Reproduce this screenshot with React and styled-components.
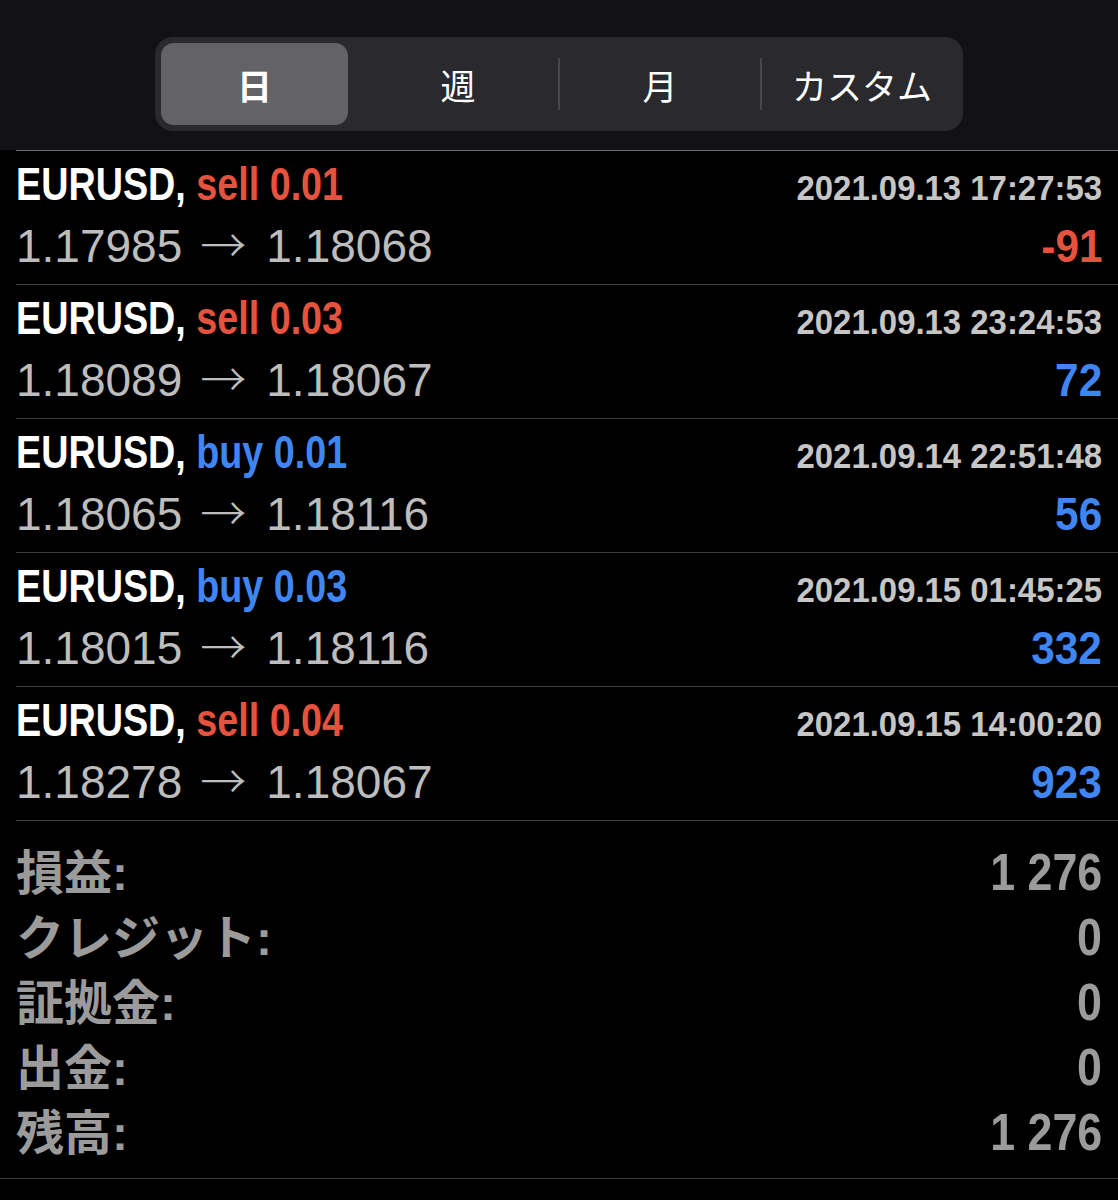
import styled, { createGlobalStyle } from "styled-components";

const GlobalStyle = createGlobalStyle`
  html, body {
    margin: 0;
    padding: 0;
    background: #000;
  }
  body {
    width: 1118px;
    font-family: "Liberation Sans", "Noto Sans CJK JP", sans-serif;
  }
`;

// コンデンス書体の代わりに横方向を縮める
const CONDENSED = `"Liberation Sans", "Noto Sans CJK JP", sans-serif`;

const Page = styled.div`
  width: 1118px;
  background: #000;
`;

// ヘッダー（期間切替）
const Header = styled.header`
  height: 150px;
  box-sizing: border-box;
  padding-top: 37px;
  background: #121113;
  display: flex;
  justify-content: center;
`;

const Segmented = styled.div`
  width: 808px;
  height: 94px;
  box-sizing: border-box;
  padding: 6px 0;
  background: #2a292e;
  border-radius: 18px;
  display: grid;
  grid-template-columns: repeat(4, 1fr);
`;

const Segment = styled.div`
  position: relative;
  display: flex;
  align-items: center;
  justify-content: center;
  margin: 0 ${(p) => (p.$active ? "9px 0 6px" : "0")};
  border-radius: 13px;
  background: ${(p) => (p.$active ? "#636267" : "transparent")};
  color: #fff;
  font-family: "Noto Sans CJK JP", sans-serif;
  font-size: 35px;
  font-weight: ${(p) => (p.$active ? 700 : 400)};
  &::before {
    content: "";
    display: ${(p) => (p.$sep ? "block" : "none")};
    position: absolute;
    left: -1px;
    top: 15px;
    bottom: 15px;
    width: 2px;
    background: #48474c;
  }
`;

// 取引行
const Row = styled.div`
  margin-left: 16px;
  padding: 2px 16px 0 0;
  height: 131px;
  border-top: 1px solid ${(p) => (p.$lead ? "#6a6a6a" : "#3c3c3c")};
`;

const Line = styled.div`
  display: flex;
  justify-content: space-between;
  align-items: baseline;
  height: 62px;
  line-height: 62px;
`;

const Symbol = styled.span`
  display: inline-block;
  transform: scaleX(0.82);
  transform-origin: left center;
  font-family: ${CONDENSED};
  font-weight: 700;
  font-size: 46px;
  color: #fff;
  white-space: nowrap;
`;

const Side = styled.span`
  color: ${(p) => (p.$buy ? "#3f86f4" : "#e5523e")};
`;

const Time = styled.span`
  display: inline-block;
  transform: scaleX(0.94);
  transform-origin: right center;
  font-family: ${CONDENSED};
  font-weight: 700;
  font-size: 35px;
  color: #c6c6c6;
  white-space: nowrap;
`;

const Prices = styled.span`
  font-family: "Liberation Sans", sans-serif;
  font-weight: 400;
  font-size: 46px;
  color: #bdbdbd;
  white-space: nowrap;
`;

const Arrow = styled.span`
  font-family: "Noto Sans CJK JP", sans-serif;
  font-weight: 300;
  line-height: 0;
  margin: 0 20px 0 18px;
`;

const Profit = styled.span`
  display: inline-block;
  transform: scaleX(0.92);
  transform-origin: right center;
  font-family: ${CONDENSED};
  font-weight: 700;
  font-size: 46px;
  color: ${(p) => (p.$neg ? "#e5523e" : "#3f86f4")};
`;

// 集計
const Summary = styled.div`
  margin-left: 16px;
  border-top: 1px solid #3c3c3c;
  padding: 16px 16px 16px 0;
`;

const SummaryRow = styled.div`
  display: flex;
  justify-content: space-between;
  align-items: baseline;
  height: 65px;
  line-height: 65px;
  color: #9b9b9b;
  font-weight: 700;
`;

const Label = styled.span`
  font-family: "Noto Sans CJK JP", sans-serif;
  font-size: 48px;
  & > i {
    font-style: normal;
    font-family: ${CONDENSED};
  }
`;

const Amount = styled.span`
  display: inline-block;
  transform: scaleX(0.86);
  transform-origin: right center;
  font-family: ${CONDENSED};
  font-size: 52px;
`;

const BottomRule = styled.div`
  border-top: 1px solid #3c3c3c;
  height: 21px;
`;

const tabs = ["日", "週", "月", "カスタム"];

const trades = [
  { side: "sell", lot: "0.01", time: "2021.09.13 17:27:53", open: "1.17985", close: "1.18068", profit: "-91" },
  { side: "sell", lot: "0.03", time: "2021.09.13 23:24:53", open: "1.18089", close: "1.18067", profit: "72" },
  { side: "buy", lot: "0.01", time: "2021.09.14 22:51:48", open: "1.18065", close: "1.18116", profit: "56" },
  { side: "buy", lot: "0.03", time: "2021.09.15 01:45:25", open: "1.18015", close: "1.18116", profit: "332" },
  { side: "sell", lot: "0.04", time: "2021.09.15 14:00:20", open: "1.18278", close: "1.18067", profit: "923" },
];

const totals = [
  ["損益", "1 276"],
  ["クレジット", "0"],
  ["証拠金", "0"],
  ["出金", "0"],
  ["残高", "1 276"],
];

const App = () => {
  return (
    <Page>
      <GlobalStyle />
      <Header>
        <Segmented>
          {tabs.map((t, i) => (
            <Segment key={t} $active={i === 0} $sep={i > 1}>
              {t}
            </Segment>
          ))}
        </Segmented>
      </Header>
      {trades.map((t, i) => (
        <Row key={t.time} $lead={i === 0}>
          <Line>
            <Symbol>
              EURUSD, <Side $buy={t.side === "buy"}>{t.side} {t.lot}</Side>
            </Symbol>
            <Time>{t.time}</Time>
          </Line>
          <Line>
            <Prices>
              {t.open}
              <Arrow>→</Arrow>
              {t.close}
            </Prices>
            <Profit $neg={t.profit.startsWith("-")}>{t.profit}</Profit>
          </Line>
        </Row>
      ))}
      <Summary>
        {totals.map(([k, v]) => (
          <SummaryRow key={k}>
            <Label>
              {k}
              <i>:</i>
            </Label>
            <Amount>{v}</Amount>
          </SummaryRow>
        ))}
      </Summary>
      <BottomRule />
    </Page>
  );
};

export default App;
